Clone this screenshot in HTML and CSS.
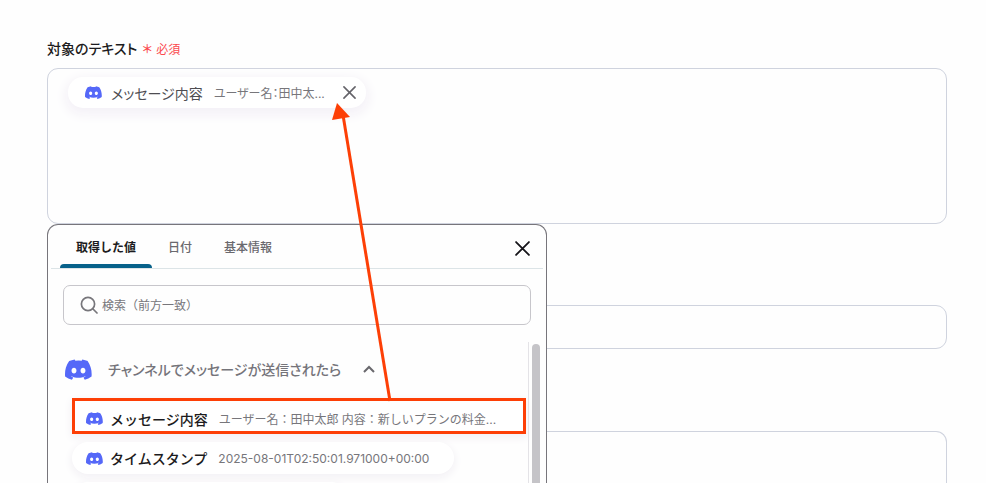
FILE: index.html
```html
<!DOCTYPE html>
<html lang="ja">
<head>
<meta charset="utf-8">
<meta name="viewport" content="width=device-width, initial-scale=1">
<title>対象のテキスト</title>
<link rel="stylesheet" href="styles.css">
</head>
<body>
<svg class="defs" aria-hidden="true">
  <symbol id="discord" viewBox="0 0 24 18">
    <path fill="#5568f8" fill-rule="evenodd" d="M20.3 1.5A19.8 19.8 0 0 0 15.4 0c-.2.4-.5.9-.6 1.3a18.3 18.3 0 0 0-5.5 0C9.1.9 8.8.4 8.6 0A19.7 19.7 0 0 0 3.7 1.5C.5 6.2-.3 10.700.1 15.2A19.9 19.9 0 0 0 6.1 18.2c.5-.6.9-1.3 1.2-2-.7-.2-1.3-.5-1.9-.9l.4-.3c3.9 1.8 8.2 1.8 12.100 0l.4.3c-.6.4-1.2.7-1.9.9.4.7.8 1.4 1.2 2a19.800 19.800 0 0 0 6-3c.5-5.2-.8-9.7-3.5-13.7ZM8 12.5c-1.200 0-2.200-1.100-2.200-2.500s1-2.500 2.200-2.500 2.200 1.100 2.200 2.500-1 2.500-2.200 2.500Zm8 0c-1.200 0-2.200-1.100-2.200-2.500s1-2.500 2.200-2.500 2.200 1.100 2.200 2.500-1 2.500-2.200 2.500Z"/>
  </symbol>
  <symbol id="cross" viewBox="0 0 14 14">
    <path d="M1 1l12 12M13 1L1 13" fill="none" stroke="currentColor" stroke-width="1.7" stroke-linecap="round"/>
  </symbol>
</svg>
<main class="form">
  <div class="label" id="target-label">対象のテキスト<span class="asterisk">＊</span><span class="required">必須</span></div>
  <div class="target">
    <div class="box box-large" role="group" aria-labelledby="target-label">
      <div class="chip">
        <svg class="brand"><use href="#discord"/></svg>
        <span class="chip-name">メッセージ内容</span>
        <span class="chip-value">ユーザー名：田中太...</span>
        <button class="chip-close" type="button" aria-label="削除"><svg><use href="#cross"/></svg></button>
      </div>
    </div>
    <section class="picker">
      <nav class="tabs">
        <button class="tab active" type="button">取得した値</button>
        <button class="tab" type="button">日付</button>
        <button class="tab" type="button">基本情報</button>
        <button class="close" type="button" aria-label="閉じる"><svg><use href="#cross"/></svg></button>
      </nav>
      <label class="search">
        <svg viewBox="0 0 18 18"><circle cx="8" cy="8" r="6.6"/><path d="M13 13l4 4"/></svg>
        <input type="text" placeholder="検索（前方一致）" aria-label="検索">
      </label>
      <div class="results">
        <div class="list">
          <button class="group" type="button">
            <svg class="brand-large"><use href="#discord"/></svg>
            <span>チャンネルでメッセージが送信されたら</span>
            <svg class="chevron" viewBox="0 0 12 8"><path d="M1 7l5-5 5 5"/></svg>
          </button>
          <button class="item selected" type="button">
            <svg class="brand"><use href="#discord"/></svg>
            <span class="name">メッセージ内容</span>
            <span class="value">ユーザー名：田中太郎 内容：新しいプランの料金...</span>
          </button>
          <button class="item" type="button">
            <svg class="brand"><use href="#discord"/></svg>
            <span class="name">タイムスタンプ</span>
            <span class="value">2025-08-01T02:50:01.971000+00:00</span>
          </button>
          <div class="item next"></div>
        </div>
        <div class="scroll"><div class="thumb"></div></div>
      </div>
    </section>
    <svg class="arrow" viewBox="0 0 64 300" aria-hidden="true">
      <path d="M11 12L58 298" fill="none" stroke="#fd3f06" stroke-width="3"/>
      <path d="M5 0L18 14L0 17Z" fill="#fd3f06"/>
    </svg>
  </div>
  <input class="box box-line" type="text" aria-label="入力欄">
  <textarea class="box box-area" aria-label="テキスト入力欄"></textarea>
</main>
</body>
</html>
```
FILE: styles.css
```css
* { box-sizing: border-box; }
body {
  margin: 0;
  background: #fefefe;
  color: #1c1b20;
  font-family: Inter, "Noto Sans CJK JP", sans-serif;
}
button, input, textarea { font: inherit; color: inherit; }
button { border: 0; padding: 0; background: none; text-align: left; }
svg { display: block; flex: none; }
.defs { position: absolute; width: 0; height: 0; }
.form {
  display: flex;
  flex-direction: column;
  height: 100vh;
  padding: 38px 39px 0 47px;
  overflow: hidden;
}
.label {
  display: flex;
  flex: none;
  align-items: center;
  height: 20px;
  margin-bottom: 10px;
  font-size: 14px;
  font-weight: 500;
  font-feature-settings: "palt";
}
.asterisk, .required { color: #fb4a4e; font-size: 12px; font-weight: 500; }
.asterisk { margin: 0 4px 0 5px; }
.required { font-weight: 400; }
.target { position: relative; flex: none; }
.box {
  display: block;
  flex: none;
  width: 100%;
  border: 1px solid #cfd3de;
  border-radius: 11px;
  background: #fefefe;
}
.box-large { height: 156px; padding: 8px 20px; }
.box-line { height: 44px; margin-top: 81px; }
.box-area { flex: 1; min-height: 0; margin-top: 82px; border-bottom: 0; border-radius: 11px 11px 0 0; resize: none; }
.chip {
  display: flex;
  align-items: center;
  width: max-content;
  height: 31px;
  padding: 0 10px 0 17px;
  border-radius: 15px;
  background: #fff;
  box-shadow: 0 4px 12px 3px #f4f1f7;
  color: #77767b;
  font-size: 12px;
  font-feature-settings: "palt";
}
.brand { width: 17px; height: 13px; }
.chip-name { margin: 0 11px 0 9px; color: #4e4d52; font-size: 14px; }
.chip-close { margin-left: 18px; color: #646369; }
.chip-close svg { width: 13px; height: 13px; }
.picker {
  position: absolute;
  top: 156px;
  left: 0;
  width: 500px;
  padding: 0 3px;
  border: 1px solid #77757b;
  border-bottom: 0;
  border-radius: 11px 11px 0 0;
  background: #fefefe;
  overflow: hidden;
}
.tabs {
  display: flex;
  height: 44px;
  padding: 0 13px 0 9px;
  border-bottom: 1px solid #dce4e7;
}
.tab {
  position: relative;
  padding: 0 16px;
  color: #6a696e;
  font-size: 12px;
  font-weight: 500;
}
.tab.active { color: #1c1b20; font-weight: 700; }
.tab.active::after {
  content: "";
  position: absolute;
  left: 0;
  right: 0;
  bottom: 0;
  height: 4px;
  border-radius: 4px 4px 0 0;
  background: #07618a;
}
.close { margin-left: auto; padding-top: 4px; color: #16151a; }
.close svg { width: 15px; height: 15px; }
.search {
  display: flex;
  align-items: center;
  height: 40px;
  margin: 16px 12px 0;
  padding: 0 16px;
  border: 1px solid #c7c6cb;
  border-radius: 7px;
}
.search svg { width: 18px; height: 18px; fill: none; stroke: #77767b; stroke-width: 1.7; stroke-linecap: round; }
.search input {
  flex: 1;
  min-width: 0;
  margin-left: 4px;
  padding: 0;
  border: 0;
  outline: 0;
  background: none;
  font-size: 12px;
}
.search input::placeholder { color: #77767b; opacity: 1; }
.results { display: flex; height: 142px; margin-top: 17px; overflow: hidden; }
.list {
  display: flex;
  flex: 1;
  flex-direction: column;
  align-items: flex-start;
  min-width: 0;
  padding: 13px 2px 0 14px;
}
.group {
  display: flex;
  flex: none;
  align-items: center;
  height: 28px;
  color: #75747a;
  font-size: 14px;
  font-weight: 500;
  font-feature-settings: "palt";
}
.brand-large { width: 27px; height: 21px; }
.group span { margin: 0 22px 0 16px; }
.chevron { width: 12px; height: 8px; fill: none; stroke: #69686d; stroke-width: 2; }
.item {
  display: flex;
  flex: none;
  align-items: center;
  width: max-content;
  height: 32px;
  margin: 8px 0 0 7px;
  padding: 0 25px 0 14px;
  border-radius: 16px;
  background: #fff;
  box-shadow: 0 3px 8px 1px #f3f1f5;
}
.item.selected {
  align-self: stretch;
  width: auto;
  height: 36px;
  margin: 15px 0 0 7px;
  padding: 5px 0 0 11px;
  border: 3px solid #fd3f06;
  border-radius: 0;
}
.item.next { width: 275px; }
.name { margin-left: 7px; font-size: 14px; font-weight: 500; white-space: nowrap; }
.value { margin-left: 11px; color: #77767b; font-size: 12px; white-space: nowrap; }
.scroll { width: 15px; padding: 2px 0 0 3px; border-left: 1px solid #e4e3e7; }
.thumb { width: 8px; height: 160px; border-radius: 4px; background: #c5c4c8; }
.arrow { position: absolute; top: 35px; left: 285px; width: 64px; height: 300px; pointer-events: none; }
```
